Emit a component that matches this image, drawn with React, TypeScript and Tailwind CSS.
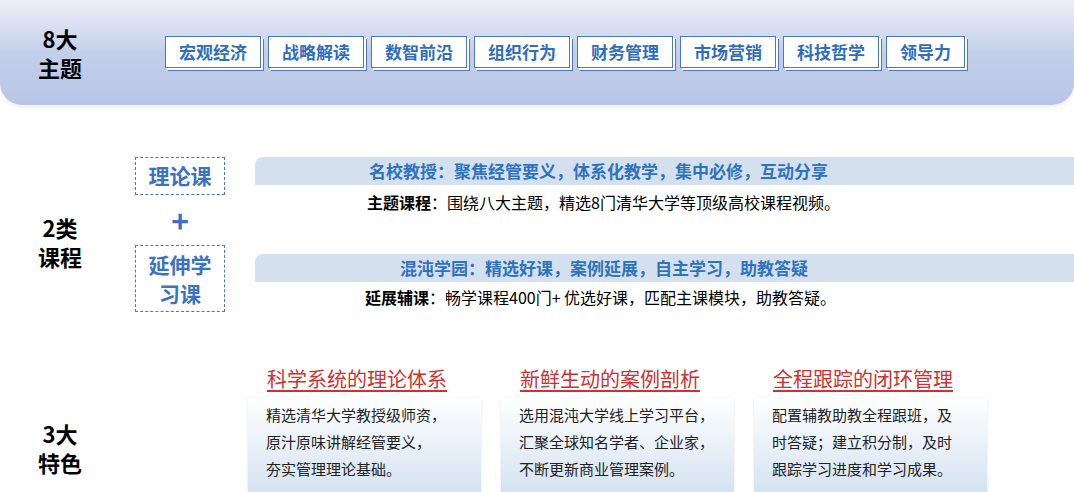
const F = { fontFamily: '"Noto Sans CJK SC","Noto Sans",sans-serif' };
const tags = ["宏观经济", "战略解读", "数智前沿", "组织行为", "财务管理", "市场营销", "科技哲学", "领导力"];
const cards = [
  { t: "科学系统的理论体系", b: ["精选清华大学教授级师资，", "原汁原味讲解经管要义，", "夯实管理理论基础。"] },
  { t: "新鲜生动的案例剖析", b: ["选用混沌大学线上学习平台，", "汇聚全球知名学者、企业家，", "不断更新商业管理案例。"] },
  { t: "全程跟踪的闭环管理", b: ["配置辅教助教全程跟班，及", "时答疑；建立积分制，及时", "跟踪学习进度和学习成果。"] },
];
function Label({ a, b }: { a: string; b: string }) {
  return (
    <div className="w-[120px] shrink-0 flex flex-col items-center text-[22px] font-bold leading-[29px] text-black">
      <div>{a}</div>
      <div>{b}</div>
    </div>
  );
}
export default function App() {
  return (
    <div style={F} className="w-[1074px] h-[492px] bg-white overflow-hidden">
      <div className="h-[105px] rounded-b-[22px] bg-gradient-to-b from-[#eef0f8] via-[#c3cfea] to-[#b8c6e6] flex items-center shadow-[0_2px_4px_rgba(0,0,0,0.08)]">
        <Label a="8大" b="主题" />
        <div className="flex gap-[7px] ml-[45px] mb-[2px]">
          {tags.map((t) => (
            <div key={t} className="h-[32px] px-[13px] bg-white border border-[#4a78c8] shadow-[2px_2px_0_#fff,3px_3px_0_#4a78c8] flex items-center text-[17px] font-bold text-[#2e6dbf]">
              {t}
            </div>
          ))}
        </div>
      </div>
      <div className="flex mt-[52px] h-[160px]">
        <div className="w-[120px] shrink-0 flex items-center justify-center pt-[10px]">
          <Label a="2类" b="课程" />
        </div>
        <div className="w-[90px] shrink-0 ml-[15px] flex flex-col items-center text-[#3b72c4] font-bold text-[21px]">
          <div className="w-[90px] h-[38px] border border-dashed border-[#4a78c8] flex items-center justify-center">理论课</div>
          <div className="text-[30px] leading-[50px]">+</div>
          <div className="w-[90px] h-[67px] border border-dashed border-[#4a78c8] flex flex-col items-center justify-center leading-[29px]">
            <div>延伸学</div><div>习课</div>
          </div>
        </div>
        <div className="flex-1 ml-[30px] flex flex-col">
          <div className="h-[28px] bg-[#d5e0ee] rounded-tl-[8px] flex items-center text-[17px] font-bold text-[#2e73c0] pl-[114px]">名校教授：聚焦经管要义，体系化教学，集中必修，互动分享</div>
          <div className="text-[16px] text-black mt-[5px] pl-[112px]"><b>主题课程</b>：围绕八大主题，精选8门清华大学等顶级高校课程视频。</div>
          <div className="h-[28px] bg-[#d5e0ee] rounded-tl-[8px] flex items-center text-[17px] font-bold text-[#2e73c0] pl-[145px] mt-[40px]">混沌学园：精选好课，案例延展，自主学习，助教答疑</div>
          <div className="text-[16px] text-black mt-[3px] pl-[110px]"><b>延展辅课</b>：畅学课程400门+ 优选好课，匹配主课模块，助教答疑。</div>
        </div>
      </div>
      <div className="flex mt-[56px]">
        <div className="w-[120px] shrink-0 flex items-center pt-[20px]">
          <Label a="3大" b="特色" />
        </div>
        <div className="flex gap-[20px] ml-[128px]">
          {cards.map((c) => (
            <div key={c.t} className="w-[233px] flex flex-col">
              <div className="relative h-[25px]">
                <span className="absolute left-[18px] top-[-9px] text-[20px] text-[#d0302f] underline underline-offset-[3px] decoration-[1.5px] bg-white px-[1px] whitespace-nowrap">{c.t}</span>
              </div>
              <div className="h-[105px] bg-gradient-to-b from-white to-[#cfdff0] px-[18px] pt-[3px] text-[15px] leading-[27px] text-[#222] shadow-[0_1px_3px_rgba(0,0,0,0.1)] whitespace-nowrap">
                {c.b.map((l) => <div key={l}>{l}</div>)}
              </div>
            </div>
          ))}
        </div>
      </div>
    </div>
  );
}
